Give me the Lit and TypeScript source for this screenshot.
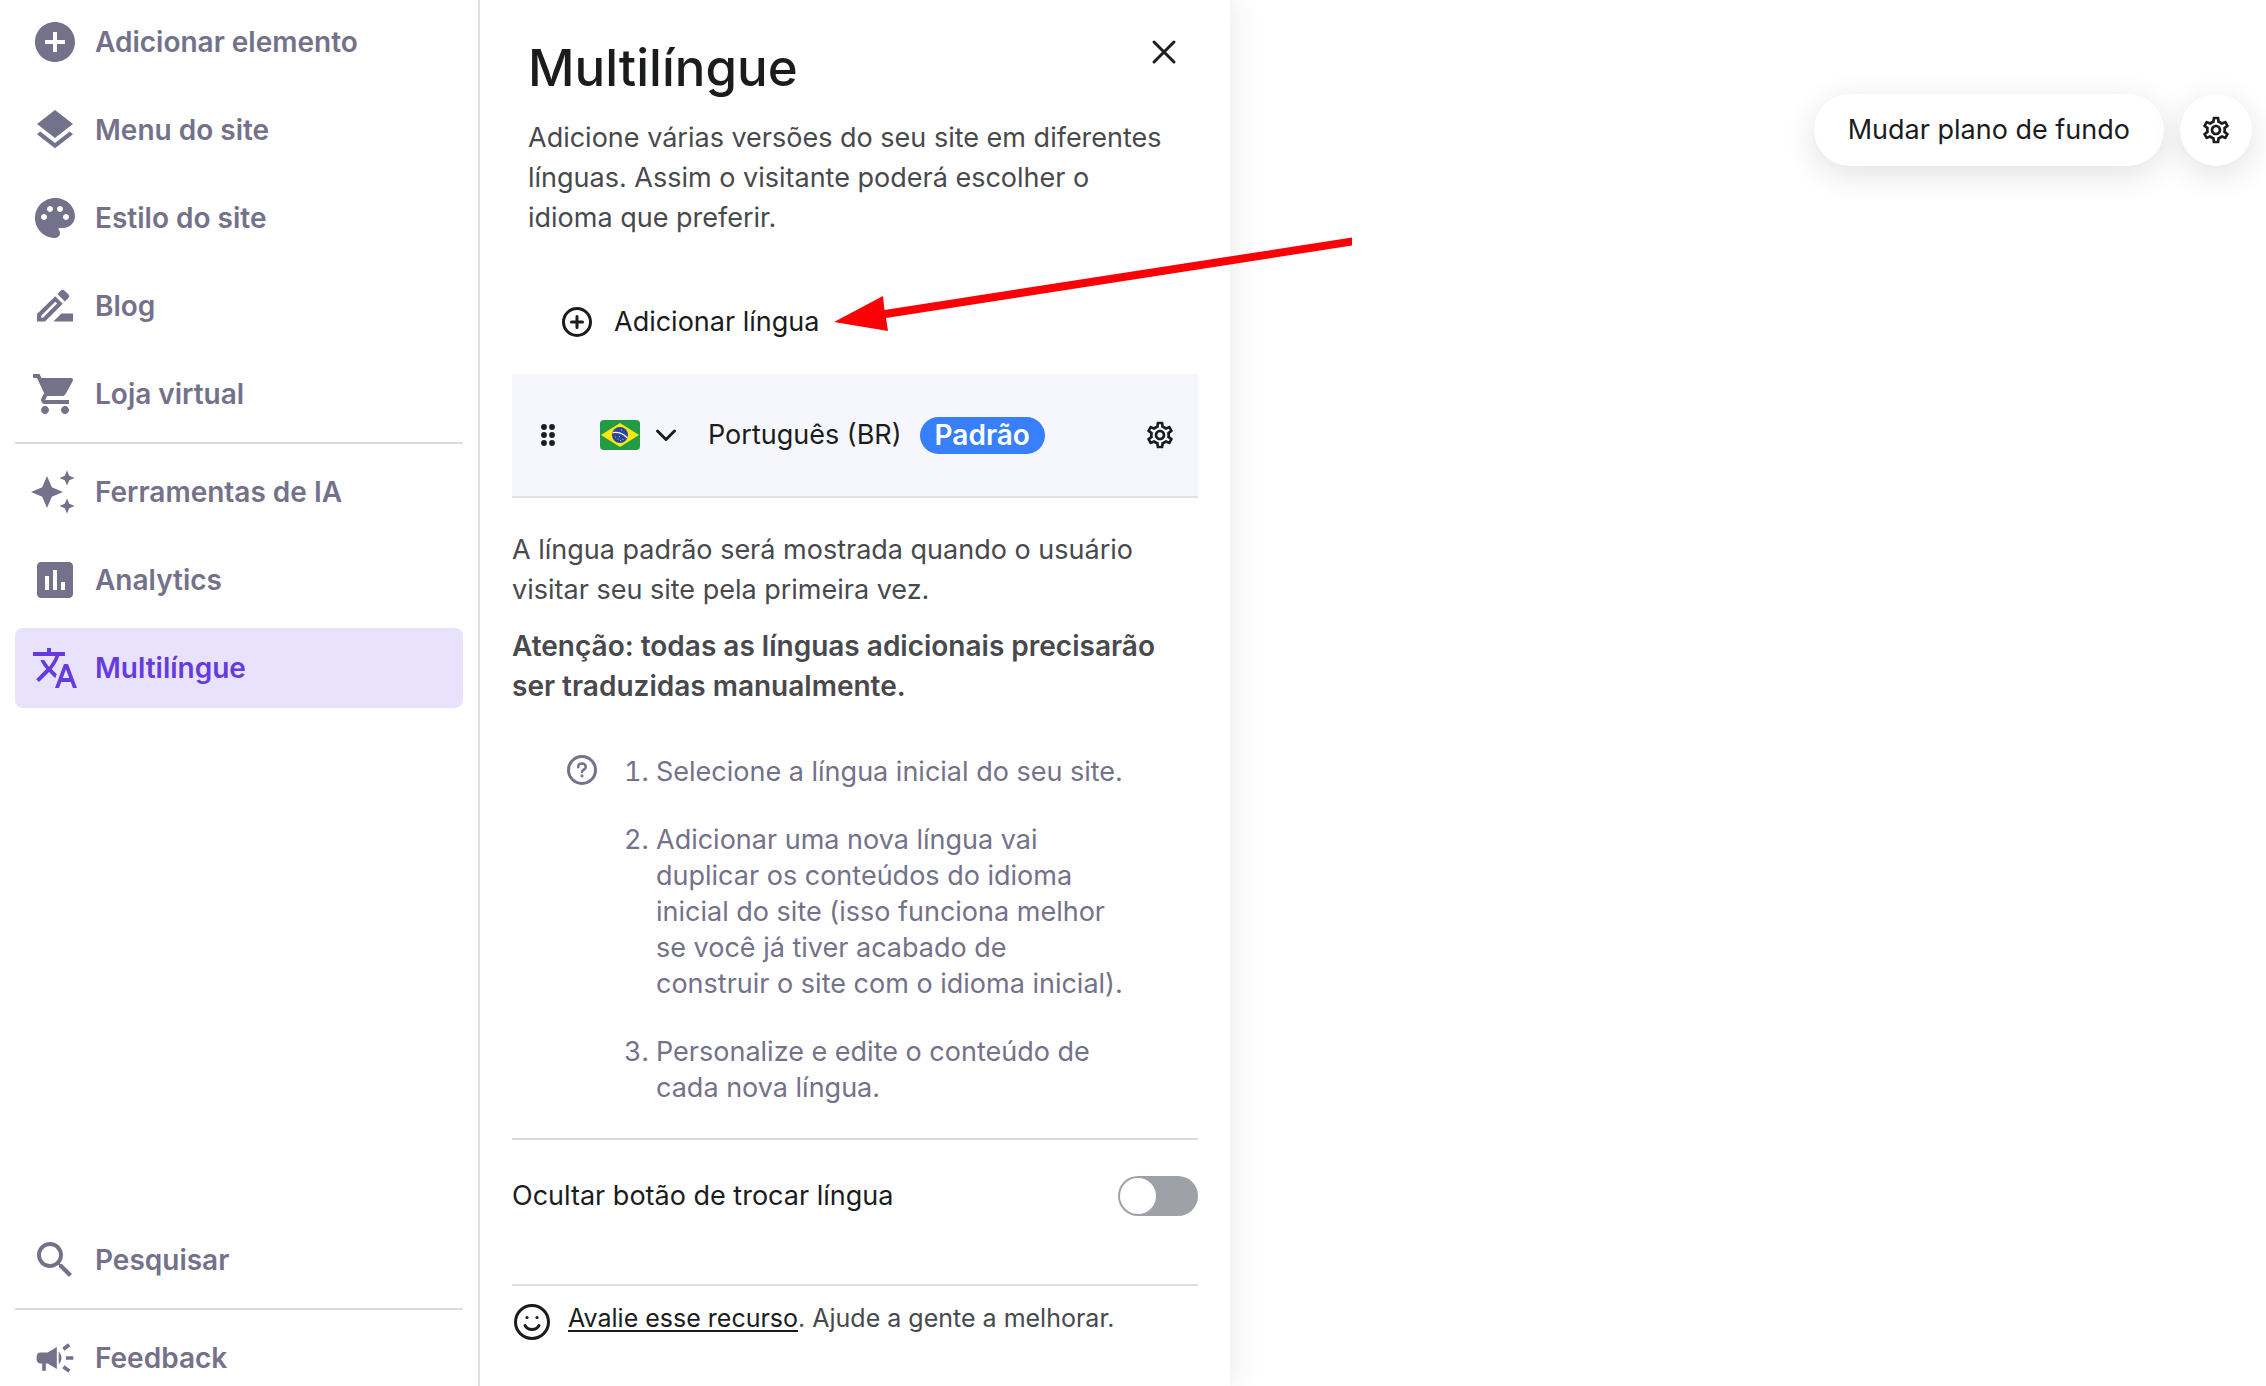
import { LitElement, html, css, svg, nothing } from "lit";
import { customElement, state } from "lit/decorators.js";
import { classMap } from "lit/directives/class-map.js";

const GEAR =
  "M19.43 12.98c.04-.32.07-.64.07-.98 0-.34-.03-.66-.07-.98l2.11-1.65c.19-.15.24-.42.12-.64l-2-3.46c-.09-.16-.26-.25-.44-.25-.06 0-.12.01-.17.03l-2.49 1c-.52-.4-1.08-.73-1.69-.98l-.38-2.65C14.46 2.18 14.25 2 14 2h-4c-.25 0-.46.18-.49.42l-.38 2.65c-.61.25-1.17.59-1.69.98l-2.49-1c-.06-.02-.12-.03-.18-.03-.17 0-.34.09-.43.25l-2 3.46c-.13.22-.07.49.12.64l2.11 1.65c-.04.32-.07.65-.07.98 0 .33.03.66.07.98l-2.11 1.65c-.19.15-.24.42-.12.64l2 3.46c.09.16.26.25.44.25.06 0 .12-.01.17-.03l2.49-1c.52.4 1.08.73 1.69.98l.38 2.65c.03.24.24.42.49.42h4c.25 0 .46-.18.49-.42l.38-2.65c.61-.25 1.17-.59 1.69-.98l2.49 1c.06.02.12.03.18.03.17 0 .34-.09.43-.25l2-3.46c.12-.22.07-.49-.12-.64l-2.11-1.65zm-1.98-1.71c.04.31.05.52.05.73 0 .21-.02.43-.05.73l-.14 1.13.89.7 1.08.84-.7 1.21-1.27-.51-1.04-.42-.9.68c-.43.32-.84.56-1.25.73l-1.06.43-.16 1.13-.2 1.35h-1.4l-.19-1.35-.16-1.13-1.06-.43c-.43-.18-.83-.41-1.23-.71l-.91-.7-1.06.43-1.27.51-.7-1.21 1.08-.84.89-.7-.14-1.13c-.03-.31-.05-.54-.05-.74s.02-.43.05-.73l.14-1.13-.89-.7-1.08-.84.7-1.21 1.27.51 1.04.42.9-.68c.43-.32.84-.56 1.25-.73l1.06-.43.16-1.13.2-1.35h1.39l.19 1.35.16 1.13 1.06.43c.43.18.83.41 1.23.71l.91.7 1.06-.43 1.27-.51.7 1.21-1.07.85-.89.7.14 1.13zM12 8c-2.21 0-4 1.79-4 4s1.79 4 4 4 4-1.79 4-4-1.79-4-4-4zm0 6c-1.1 0-2-.9-2-2s.9-2 2-2 2 .9 2 2-.9 2-2 2z";

const star = (cx: number, cy: number, r: number) => {
  const k = r * 0.3;
  return `M${cx} ${cy - r}L${cx + k} ${cy - k}L${cx + r} ${cy}L${cx + k} ${cy + k}L${cx} ${cy + r}L${cx - k} ${cy + k}L${cx - r} ${cy}L${cx - k} ${cy - k}Z`;
};

const ICONS: Record<string, string> = {
  add: "M12 2C6.48 2 2 6.48 2 12s4.48 10 10 10 10-4.48 10-10S17.52 2 12 2zm5 11h-4v4h-2v-4H7v-2h4V7h2v4h4v2z",
  layers:
    "M11.99 18.54l-7.37-5.73L3 14.07l9 7 9-7-1.63-1.27-7.38 5.74zM12 16l7.36-5.73L21 9l-9-7-9 7 1.63 1.27L12 16z",
  palette:
    "M12 2C6.49 2 2 6.49 2 12s4.49 10 10 10c1.38 0 2.5-1.12 2.5-2.5 0-.61-.23-1.2-.64-1.67-.08-.1-.13-.21-.13-.33 0-.28.22-.5.5-.5H16c3.31 0 6-2.69 6-6 0-4.96-4.49-9-10-9zM6.5 13C5.67 13 5 12.33 5 11.5S5.67 10 6.5 10 8 10.67 8 11.5 7.33 13 6.5 13zm3-4C8.67 9 8 8.33 8 7.5S8.67 6 9.5 6s1.5.67 1.5 1.5S10.33 9 9.5 9zm5 0c-.83 0-1.5-.67-1.5-1.5S13.67 6 14.5 6s1.5.67 1.5 1.5S15.33 9 14.5 9zm3 4c-.83 0-1.5-.67-1.5-1.5s.67-1.5 1.5-1.5 1.5.67 1.5 1.5-.67 1.5-1.5 1.5z",
  pencil:
    "M12.1 7.15L15.85 10.9 7 19.75H3V16zM12.1 9.9L5 17v.9h.95L13.1 10.8zM13.2 6.05l1.8-1.8a1.2 1.2 0 0 1 1.7 0l2.05 2.05a1.2 1.2 0 0 1 0 1.7l-1.8 1.8zM11.2 19.75l4-4H21v4z",
  cart: "M7 18c-1.1 0-1.99.9-1.99 2S5.9 22 7 22s2-.9 2-2-.9-2-2-2zM1 2v2h2l3.6 7.59-1.35 2.45c-.16.28-.25.61-.25.96 0 1.1.9 2 2 2h12v-2H7.42c-.14 0-.25-.11-.25-.25l.03-.12.9-1.63h7.45c.75 0 1.41-.41 1.75-1.03l3.58-6.49c.08-.14.12-.31.12-.48 0-.55-.45-1-1-1H5.21l-.94-2H1zm16 16c-1.1 0-1.99.9-1.99 2s.89 2 1.99 2 2-.9 2-2-.9-2-2-2z",
  sparkle: star(8, 12, 8) + star(18, 5, 3.8) + star(18, 19, 3.8),
  chart:
    "M19 3H5c-1.1 0-2 .9-2 2v14c0 1.1.9 2 2 2h14c1.1 0 2-.9 2-2V5c0-1.1-.9-2-2-2zM9 17H7v-7h2v7zm4 0h-2V7h2v10zm4 0h-2v-4h2v4z",
  translate:
    "M12.87 15.07l-2.54-2.51.03-.03c1.74-1.94 2.98-4.17 3.71-6.53H17V4h-7V2H8v2H1v1.99h11.17C11.5 7.92 10.44 9.75 9 11.35 8.07 10.32 7.3 9.19 6.69 8h-2c.73 1.63 1.73 3.17 2.98 4.56l-5.09 5.02L4 19l5-5 3.11 3.11.76-2.04zM18.5 10h-2L12 22h2l1.12-3h4.75L21 22h2l-4.5-12zm-2.62 7l1.62-4.33L19.12 17h-3.24z",
  search:
    "M15.5 14h-.79l-.28-.27C15.41 12.59 16 11.11 16 9.5 16 5.91 13.09 3 9.5 3S3 5.91 3 9.5 5.91 16 9.5 16c1.61 0 3.09-.59 4.23-1.57l.27.28v.79l5 4.99L20.49 19l-4.99-5zm-6 0C7.01 14 5 11.99 5 9.5S7.01 5 9.5 5 14 7.01 14 9.5 11.99 14 9.5 14z",
  megaphone:
    "M18 11v2h4v-2h-4zm-2 6.61c.96.71 2.21 1.65 3.2 2.39.4-.53.8-1.07 1.2-1.6-.99-.74-2.24-1.68-3.2-2.4-.4.54-.8 1.08-1.2 1.61zM20.4 5.6c-.4-.53-.8-1.07-1.2-1.6-.99.74-2.24 1.68-3.2 2.4.4.53.8 1.07 1.2 1.6.96-.72 2.21-1.65 3.2-2.4zM4 9c-1.1 0-2 .9-2 2v2c0 1.1.9 2 2 2h1v4h2v-4h1l5 3V6L8 9H4zm11.5 3c0-1.33-.58-2.53-1.5-3.35v6.69c.92-.81 1.5-2.01 1.5-3.34z",
};

interface NavItem {
  id: string;
  label: string;
  icon: string;
  small?: boolean;
}

const SITE: NavItem[] = [
  { id: "add", label: "Adicionar elemento", icon: "add" },
  { id: "menu", label: "Menu do site", icon: "layers" },
  { id: "style", label: "Estilo do site", icon: "palette" },
  { id: "blog", label: "Blog", icon: "pencil" },
  { id: "store", label: "Loja virtual", icon: "cart" },
];
const TOOLS: NavItem[] = [
  { id: "ai", label: "Ferramentas de IA", icon: "sparkle" },
  { id: "analytics", label: "Analytics", icon: "chart" },
  { id: "languages", label: "Multilíngue", icon: "translate" },
];
const SEARCH: NavItem[] = [{ id: "search", label: "Pesquisar", icon: "search" }];
const FEEDBACK: NavItem[] = [
  { id: "feedback", label: "Feedback", icon: "megaphone", small: true },
];

const STEPS = [
  "Selecione a língua inicial do seu site.",
  "Adicionar uma nova língua vai duplicar os conteúdos do idioma inicial do site (isso funciona melhor se você já tiver acabado de construir\u00a0o site com o idioma inicial).",
  "Personalize e edite o conteúdo de cada nova língua.",
];

const gear = html`<svg class="gear" viewBox="0 0 24 24" aria-hidden="true"><path d=${GEAR} /></svg>`;

@customElement("app-root")
export class AppRoot extends LitElement {
  @state() private active = "languages";
  @state() private hideSwitcher = false;

  static styles = css`
    :host {
      display: block;
      font-family: Inter, "Open Sans", sans-serif;
      font-size: 27px;
      line-height: 40px;
      color: #1b1c1e;
    }
    * {
      box-sizing: border-box;
    }
    button {
      font: inherit;
      color: inherit;
      background: none;
      border: 0;
      padding: 0;
      margin: 0;
      cursor: pointer;
    }
    h1,
    p,
    ol,
    ul {
      margin: 0;
      padding: 0;
    }
    svg {
      display: block;
      flex: none;
      fill: currentColor;
    }
    .app {
      position: relative;
      display: grid;
      grid-template-columns: minmax(360px, 480px) minmax(600px, 750px) 1fr;
      height: 100vh;
      overflow: hidden;
      background: #fff;
    }

    .sidebar {
      display: flex;
      flex-direction: column;
      height: 100vh;
      padding: 2px 15px 0;
      border-right: 2px solid #dcdde5;
      overflow: hidden;
    }
    .nav {
      display: flex;
      flex-direction: column;
      gap: 8px;
      list-style: none;
    }
    .nav + .nav {
      margin-top: 8px;
      padding-top: 8px;
      border-top: 2px solid #dcdcdf;
    }
    .bottom {
      margin-top: auto;
      margin-bottom: -12px;
    }
    .item {
      display: flex;
      align-items: center;
      gap: 16px;
      width: 100%;
      height: 80px;
      padding: 0 16px;
      border-radius: 8px;
      font-size: 28px;
      font-weight: 600;
      color: #73728a;
      text-align: left;
    }
    .item.active {
      background: #e9e2fd;
      color: #653be0;
    }
    .item svg {
      width: 48px;
      height: 48px;
    }
    .item svg.small {
      width: 44px;
      height: 44px;
      margin: 0 2px;
    }

    .panel {
      display: flex;
      flex-direction: column;
      padding: 36px 32px 0;
      box-shadow: 0 0 32px rgba(0, 0, 0, 0.1);
      clip-path: inset(0 -40px 0 0);
      z-index: 1;
      background: #fff;
    }
    .head {
      display: flex;
      justify-content: space-between;
      align-items: flex-start;
      padding: 0 16px;
    }
    h1 {
      font-size: 51px;
      line-height: 64px;
      font-weight: 500;
    }
    .close svg {
      width: 36px;
      height: 32px;
      fill: none;
      stroke: currentColor;
      stroke-width: 3;
      stroke-linecap: round;
    }
    .muted {
      color: #48494d;
    }
    .intro {
      padding: 0 32px 0 16px;
      margin-top: 18px;
    }
    .add {
      display: flex;
      align-items: center;
      align-self: flex-start;
      gap: 20px;
      height: 56px;
      margin: 56px 0 24px 48px;
    }
    .add svg,
    .help svg {
      width: 34px;
      height: 34px;
      fill: none;
      stroke: currentColor;
      stroke-width: 3;
      stroke-linecap: round;
      stroke-linejoin: round;
    }
    .lang {
      display: flex;
      align-items: center;
      height: 124px;
      padding: 0 22px 0 27px;
      background: #f5f7fc;
      border-bottom: 2px solid #e2e3e7;
    }
    .drag svg {
      width: 18px;
      height: 26px;
    }
    .flag {
      display: flex;
      align-items: center;
      gap: 14px;
      margin: 0 30px 0 43px;
    }
    .flag .br {
      width: 40px;
      height: 30px;
      border-radius: 4px;
    }
    .flag .chev {
      width: 24px;
      height: 24px;
      fill: none;
      stroke: currentColor;
      stroke-width: 3;
      stroke-linecap: round;
      stroke-linejoin: round;
    }
    .badge {
      margin-left: 18px;
      padding: 0 15px;
      border-radius: 19px;
      line-height: 37px;
      font-size: 28px;
      font-weight: 600;
      color: #fff;
      background: #387ffb;
    }
    .gear {
      width: 32px;
      height: 32px;
    }
    .lang .config {
      margin-left: auto;
    }
    .note {
      margin-top: 32px;
    }
    .warn {
      margin-top: 16px;
      font-size: 28px;
      font-weight: 600;
    }
    .help {
      display: flex;
      align-items: flex-start;
      padding: 44px 56px 32px 53px;
      color: #73728a;
      border-bottom: 2px solid #dcdcdf;
    }
    .help svg {
      margin-top: 3px;
    }
    .steps {
      display: flex;
      flex-direction: column;
      gap: 32px;
      padding: 4px 0 0 57px;
      line-height: 36px;
    }
    .toggle {
      display: flex;
      align-items: center;
      justify-content: space-between;
      padding: 36px 0 68px;
      border-bottom: 2px solid #dcdde5;
    }
    .toggle input {
      appearance: none;
      display: flex;
      width: 80px;
      height: 40px;
      margin: 0;
      padding: 2px;
      border-radius: 20px;
      background: #9ea2a8;
      cursor: pointer;
    }
    .toggle input::before {
      content: "";
      width: 36px;
      height: 36px;
      border-radius: 50%;
      background: #fff;
    }
    .toggle input:checked {
      justify-content: flex-end;
      background: #653be0;
    }
    .rate {
      display: flex;
      align-items: flex-start;
      gap: 16px;
      padding-top: 12px;
      font-size: 25px;
    }
    .rate svg {
      width: 40px;
      height: 40px;
      margin-top: 4px;
    }
    .rate a {
      color: #1b1c1e;
      text-decoration: underline;
      text-decoration-thickness: 2px;
      text-underline-offset: 3px;
    }

    .canvas {
      display: flex;
      justify-content: flex-end;
      align-items: flex-start;
      gap: 16px;
      padding: 94px 14px 0;
    }
    .pill {
      display: flex;
      align-items: center;
      justify-content: center;
      height: 72px;
      padding: 0 34px;
      border-radius: 36px;
      background: #fff;
      box-shadow: 0 8px 32px rgba(0, 0, 0, 0.12);
    }
    .pill.round {
      width: 72px;
      padding: 0;
    }
    /* Annotation drawn over both the panel and the canvas. */
    .arrow {
      position: absolute;
      left: 834px;
      top: 236px;
      width: 520px;
      height: 98px;
      z-index: 2;
      pointer-events: none;
      fill: #fb0007;
    }
  `;

  private nav(items: NavItem[]) {
    return html`<ul class="nav">
      ${items.map(
        (i) => html`<li>
          <button
            class=${classMap({ item: true, active: this.active === i.id })}
            aria-current=${this.active === i.id ? "page" : nothing}
            @click=${() => (this.active = i.id)}
          >
            <svg class=${classMap({ small: !!i.small })} viewBox="0 0 24 24" aria-hidden="true">
              <path fill-rule="evenodd" d=${ICONS[i.icon]} />
            </svg>
            ${i.label}
          </button>
        </li>`
      )}
    </ul>`;
  }

  render() {
    return html`<div class="app">
      <nav class="sidebar">
        ${this.nav(SITE)} ${this.nav(TOOLS)}
        <div class="bottom">${this.nav(SEARCH)} ${this.nav(FEEDBACK)}</div>
      </nav>

      <main class="panel">
        <header class="head">
          <h1>Multilíngue</h1>
          <button class="close" aria-label="Fechar">
            <svg viewBox="0 0 36 32" aria-hidden="true"><path d="M8 6l20 20M28 6L8 26" /></svg>
          </button>
        </header>
        <p class="intro muted">
          Adicione várias versões do seu site em diferentes línguas. Assim o visitante poderá
          escolher o idioma que preferir.
        </p>
        <button class="add">
          <svg viewBox="0 0 34 34" aria-hidden="true">
            <circle cx="17" cy="17" r="13.5" />
            <path d="M17 11.5v11M11.5 17h11" />
          </svg>
          Adicionar língua
        </button>

        <section class="lang">
          <button class="drag" aria-label="Reordenar">
            <svg viewBox="0 0 18 26" aria-hidden="true">
              ${[5, 13].map((x) => [5, 13, 21].map((y) => svg`<circle cx=${x} cy=${y} r="2.9" />`))}
            </svg>
          </button>
          <button class="flag" aria-label="Escolher bandeira" aria-haspopup="listbox">
            <svg class="br" viewBox="0 0 40 30" aria-hidden="true">
              <rect width="40" height="30" fill="#249a45" />
              <path d="M20 3L39 15 20 27 1 15z" fill="#fbe80f" />
              <circle cx="20" cy="15" r="8" fill="#2a459d" />
              <path d="M12.6 12.6c5.5-.8 11 1.2 14.6 5.2" fill="none" stroke="#fff" stroke-width="1.3" />
              <path
                d="M15 17h1M17.5 19h1M20 20.500h1M22.5 19.5h1M19 16.5h1M21 10h1"
                fill="none"
                stroke="#a9b8e0"
                stroke-width="1"
              />
            </svg>
            <svg class="chev" viewBox="0 0 24 24" aria-hidden="true"><path d="M3.5 8L12 16.5 20.5 8" /></svg>
          </button>
          <span>Português (BR)</span>
          <span class="badge">Padrão</span>
          <button class="config" aria-label="Configurar língua">${gear}</button>
        </section>

        <p class="note muted">
          A língua padrão será mostrada quando o usuário visitar seu site pela primeira vez.
        </p>
        <p class="warn muted">
          Atenção: todas as línguas adicionais precisarão ser traduzidas manualmente.
        </p>

        <section class="help">
          <svg viewBox="0 0 34 34" aria-hidden="true">
            <circle cx="17" cy="17" r="13.5" />
            <path d="M13.2 14.2c0-2.3 1.7-3.7 3.8-3.7s3.8 1.4 3.8 3.4c0 2.5-3.5 2.8-3.8 5" stroke-width="2.5" />
            <circle cx="17" cy="22.8" r="0.6" stroke-width="2" />
          </svg>
          <ol class="steps">
            ${STEPS.map((s) => html`<li>${s}</li>`)}
          </ol>
        </section>

        <div class="toggle">
          <label for="hide-switcher">Ocultar botão de trocar língua</label>
          <input
            id="hide-switcher"
            type="checkbox"
            role="switch"
            .checked=${this.hideSwitcher}
            @change=${(e: Event) => (this.hideSwitcher = (e.target as HTMLInputElement).checked)}
          />
        </div>

        <footer class="rate muted">
          <svg viewBox="0 0 40 40" aria-hidden="true" color="#1b1c1e">
            <circle cx="20" cy="20" r="16.5" fill="none" stroke="currentColor" stroke-width="3" />
            <circle cx="15" cy="15.5" r="1.6" />
            <circle cx="25" cy="15.5" r="1.6" />
            <path
              d="M13 23.5c1.5 2.8 4 4 7 4s5.5-1.2 7-4"
              fill="none"
              stroke="currentColor"
              stroke-width="3"
              stroke-linecap="round"
            />
          </svg>
          <p><a href="#avaliar">Avalie esse recurso</a>. Ajude a gente a melhorar.</p>
        </footer>
      </main>

      <section class="canvas">
        <button class="pill">Mudar plano de fundo</button>
        <button class="pill round" aria-label="Configurações da seção">${gear}</button>
      </section>

      <svg class="arrow" viewBox="0 0 520 98" aria-hidden="true">
        <path d="M0 86L49 60 50.5 74 518 1.5V9.5L52 82 54 95z" />
      </svg>
    </div>`;
  }
}
